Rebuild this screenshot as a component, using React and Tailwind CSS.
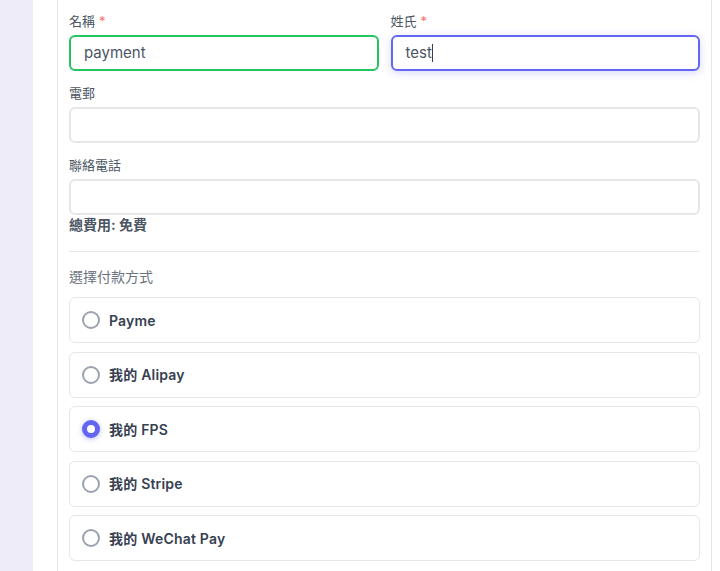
import React from 'react';

const methods = [
    { label: 'Payme', checked: false },
    { label: '我的 Alipay', checked: false },
    { label: '我的 FPS', checked: true },
    { label: '我的 Stripe', checked: false },
    { label: '我的 WeChat Pay', checked: false },
];

const font = { fontFamily: 'Inter, "Noto Sans CJK TC", "Noto Sans", sans-serif' };

const Label = ({ children, required }) => (
    <div className="h-5 leading-5 text-[13px] text-[#4b5563] mb-1">
        {children}
        {required && <span className="text-[#f87171] ml-1">*</span>}
    </div>
);

const Radio = ({ checked }) => (
    checked ? (
        <span className="w-[18px] h-[18px] rounded-full border-[5px] border-[#6366f1] bg-white shadow-[0_1px_5px_rgba(99,102,241,0.45)]"></span>
    ) : (
        <span className="w-[18px] h-[18px] rounded-full border-2 border-[#9ca3af] bg-white"></span>
    )
);

const App = () => {
    return (
        <div className="flex w-[720px] h-[571px] overflow-hidden bg-white" style={font}>
            <aside className="w-[33px] shrink-0 bg-[#efecfa]"></aside>
            <main className="flex-1 pl-6 pr-2">
                <div className="h-full border-x border-[#e5e7eb] px-[11px] pt-[11px]">
                    <div className="grid grid-cols-2 gap-3">
                        <div>
                            <Label required>名稱</Label>
                            <div className="h-9 rounded-md border-2 border-[#22c55e] pl-[13px] flex items-center text-[15px] text-[#4b5563]">
                                payment
                            </div>
                        </div>
                        <div>
                            <Label required>姓氏</Label>
                            <div className="h-9 rounded-md border-2 border-[#6366f1] pl-[13px] flex items-center text-[15px] text-[#4b5563] shadow-[0_2px_8px_rgba(99,102,241,0.25)]">
                                test<span className="w-px h-[18px] bg-[#374151]"></span>
                            </div>
                        </div>
                    </div>

                    <div className="mt-3">
                        <Label>電郵</Label>
                        <div className="h-9 rounded-md border-2 border-[#e5e7eb]"></div>
                    </div>

                    <div className="mt-3">
                        <Label>聯絡電話</Label>
                        <div className="h-9 rounded-md border-2 border-[#e5e7eb]"></div>
                    </div>

                    <div className="text-[14px] leading-5 font-bold text-[#4b5563]">總費用: 免費</div>

                    <div className="border-t border-[#e5e7eb] mt-4"></div>

                    <div className="text-[14px] leading-5 text-[#6b7280] mt-[15px]">選擇付款方式</div>

                    <div className="flex flex-col gap-[8.5px] mt-[10px]">
                        {methods.map((m) => (
                            <div
                                key={m.label}
                                className="h-[46px] rounded-md border border-[#e5e7eb] flex items-center gap-[9px] pl-3"
                            >
                                <Radio checked={m.checked} />
                                <span className="text-[14px] font-semibold text-[#374151] tracking-[0.2px]">{m.label}</span>
                            </div>
                        ))}
                    </div>
                </div>
            </main>
        </div>
    );
};

export default App;
